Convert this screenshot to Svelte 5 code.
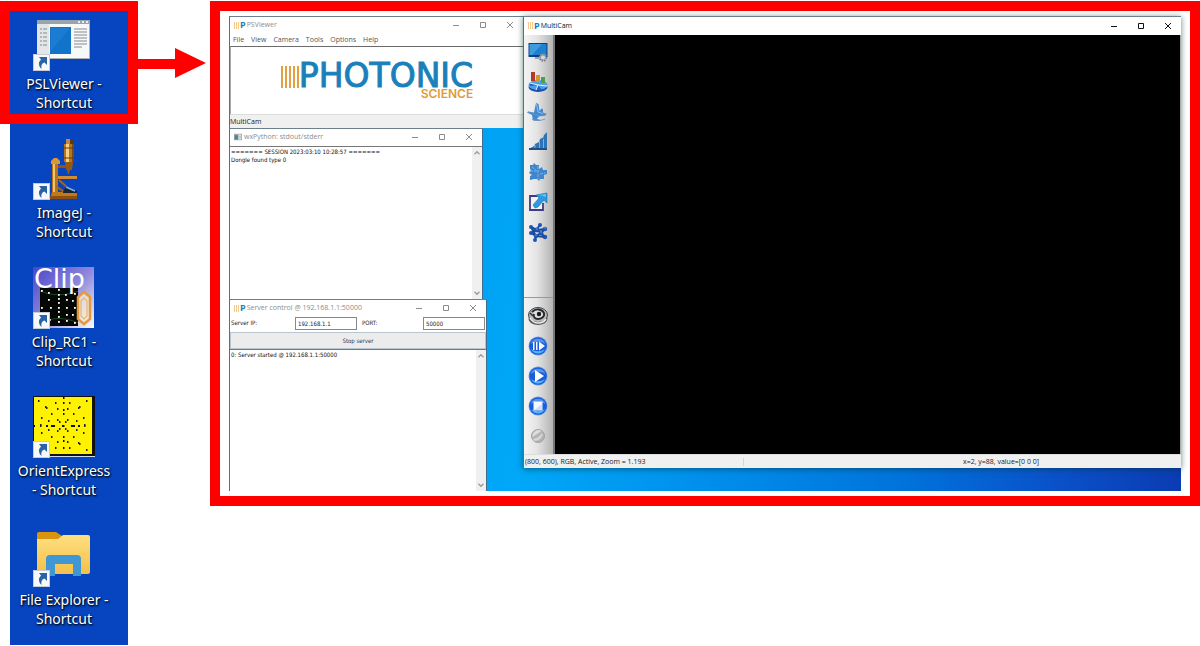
<script>
  const shortcuts = [
    { icon: 'viewer', lines: ['PSLViewer -', 'Shortcut'] },
    { icon: 'scope', lines: ['ImageJ -', 'Shortcut'] },
    { icon: 'clip', lines: ['Clip_RC1 -', 'Shortcut'] },
    { icon: 'orient', lines: ['OrientExpress', '- Shortcut'] },
    { icon: 'folder', lines: ['File Explorer -', 'Shortcut'] }
  ];
  const menus = ['File', 'View', 'Camera', 'Tools', 'Options', 'Help'];
  const tools = ['display', 'chart', 'plane', 'levels', 'puzzle', 'export', 'network'];
  const controls = ['camera', 'step', 'play', 'stop', 'record'];

  // Spots of the Laue pattern on the OrientExpress icon, one quadrant each
  const spots = [
    [22, 6], [12, 10], [13, 11], [24, 12], [18, 17], [24, 23], [26, 25],
    [8, 21], [15, 24], [7, 28], [5, 4]
  ];
  const mirrored = spots.flatMap(([x, y]) => [
    [x, y], [58 - x, y], [x, 57 - y], [58 - x, 57 - y]
  ]);
  const axisX = [1, 14, 19, 21, 30, 39, 41, 46];
  const axisY = [1, 6, 13, 17, 29, 40, 44, 51];

  const clipDots = [
    [9, 23], [16, 25], [26, 22], [26, 27], [26, 31], [26, 35], [26, 40], [26, 44],
    [26, 49], [26, 54], [33, 27], [42, 26], [16, 32], [34, 32], [40, 33], [9, 40],
    [18, 40], [34, 40], [42, 40], [34, 47], [40, 47], [34, 53], [42, 55], [17, 52], [14, 55]
  ];

  let ip = $state('192.168.1.1');
  let port = $state('50000');
</script>

{#snippet caption(title, brand, active)}
  <header class="caption" class:active>
    {#if brand}
      <span class="brand" aria-hidden="true"><i></i><i></i><i></i><b>P</b></span>
    {:else}
      <svg class="appicon" viewBox="0 0 10 8" aria-hidden="true">
        <rect x=".5" y=".5" width="9" height="7" fill="#eef3f5" stroke="#9aa5aa" />
        <rect x="1" y="1.5" width="4" height="5.5" fill="#3a8a98" />
        <path d="M6 3h3M6 5h3" stroke="#9aa" />
      </svg>
    {/if}
    <span class="title">{title}</span>
    <button aria-label="Minimise"><svg viewBox="0 0 8 8"><path d="M1 4.5h6" /></svg></button>
    <button aria-label="Maximise"><svg viewBox="0 0 8 8"><path d="M1.500 1.500h5v5h-5z" /></svg></button>
    <button aria-label="Close"><svg viewBox="0 0 8 8"><path d="M1 1l6 6M7 1l-6 6" /></svg></button>
  </header>
{/snippet}

{#snippet scrollbar()}
  <div class="scrollbar" aria-hidden="true">
    <svg viewBox="0 0 8 8"><path d="M2 5l2-2 2 2" /></svg>
    <svg viewBox="0 0 8 8"><path d="M2 3l2 2 2-2" /></svg>
  </div>
{/snippet}

{#snippet toolIcon(name)}
  <svg viewBox="0 0 20 20" aria-hidden="true">
    {#if name === 'display'}
      <rect x=".5" y="1" width="19" height="14" fill="#0c3f86" />
      <path d="M1.500 2H18.500v11H1.500z" fill="#1f80d0" />
      <path d="M1.500 2H14L4 13H1.500z" fill="#4aa6e6" opacity=".7" />
      <path d="M7 15h4v2H7z" fill="#9aa4b0" />
      <circle cx="15" cy="15.500" r="3.200" fill="#ddd" stroke="#7d858d" stroke-width="2.200" stroke-dasharray="1.600 .8" />
      <circle cx="15" cy="15.500" r="2.500" fill="#d6dade" stroke="#8b929a" />
    {:else if name === 'chart'}
      <ellipse cx="10" cy="15" rx="9.500" ry="5" fill="#1251ad" />
      <ellipse cx="10" cy="13" rx="9.500" ry="5" fill="#4f9fe6" />
      <path d="M10 13l-8-2v3zM10 13l-2 5h6z" fill="#1d63c0" />
      <path d="M10 13L2 11M10 13l9 1M10 13l-2 5" stroke="#e8f3ff" stroke-width="1" />
      <path d="M3 0h4v9H3z" fill="#b5382c" />
      <path d="M8 3h4v7H8z" fill="#cf9a2a" />
      <path d="M13 5h4v6h-4z" fill="#49a04a" />
    {:else if name === 'plane'}
      <path d="M8 1l2.500 1 1 7 2-2.500 1.500.5 0 3.500 4 1.500-3.500 2-4.500.5-2 2.500 4 1-2 1-6-.5-1-5.500-5-2.500 1-1 6 1z" fill="#4389cf" />
      <path d="M8.500 2l1.500 8 5 1.500" fill="none" stroke="#9ccbf3" stroke-width=".8" />
      <path d="M0 10c5 1 9 5 18 3M4 17c4 2 8 2 13 0" fill="none" stroke="#6d93bd" stroke-width=".9" />
    {:else if name === 'levels'}
      <path d="M1 17l5-3v1l1-3 4-2v1l1-4 3-1.500v1l1-3.500 3-3v17H1z" fill="#2d74b4" />
      <path d="M7 13v3M11.500 10v6M15.500 7v9" stroke="#8fc2ea" stroke-width=".8" />
      <path d="M1 16h18v2H1z" fill="#1f4f86" />
    {:else if name === 'puzzle'}
      <path d="M2 3h3l1-2 2 2h3v4l3-2 1 3h4v4l-3 1v4h-4l-1 2-2-2H6l-4 1v-4l2-1-3-2 2-3-1-1z" fill="#3f86cd" />
      <path d="M2 9h9M10 4v13M4 5l4 3M12 12l5-1" stroke="#7fb2e4" stroke-width="1" stroke-dasharray="3 1" />
    {:else if name === 'export'}
      <path d="M12 4H2v14h13v-7" fill="#f2f2f6" stroke="#3f3c82" stroke-width="1.800" />
      <path d="M5 13l6-7-3-3L19 1v10l-3-3-6 7-3 1z" fill="#2b9adf" stroke="#1470b6" stroke-width=".6" />
      <path d="M11 3l7-1v3z" fill="#63c0ee" />
    {:else if name === 'network'}
      <g stroke="#1c479a" stroke-width="2" fill="none">
        <path d="M3 5l6 3 8-1M3 11l5 3 9 1M12 3l-4 5M13 11l-5 3-1 4M3 5l5 9M9 8l4 3 4-4M3 11l6-3M13 11l4 4" />
      </g>
      <g fill="#1e54b0">
        <circle cx="12" cy="3" r="2" /><circle cx="3" cy="5" r="2" /><circle cx="17" cy="7" r="2.200" />
        <circle cx="9" cy="8" r="2.400" /><circle cx="13" cy="11" r="2.400" /><circle cx="3" cy="11" r="2" />
        <circle cx="8" cy="14" r="2.200" /><circle cx="17" cy="15" r="2.200" /><circle cx="7" cy="18" r="2" />
      </g>
      <path d="M8 7h2M12 10h2M16 6h2M7 13h2" stroke="#5f9be6" />
    {:else if name === 'camera'}
      <ellipse cx="10" cy="13" rx="9.500" ry="6" fill="#55585a" />
      <ellipse cx="10" cy="9" rx="9.500" ry="7.500" fill="#b9bcbd" stroke="#3f4142" />
      <path d="M2 12c3 6 12 7 16 1" fill="none" stroke="#eee" stroke-width="1.500" />
      <path d="M4 6c4-4 10-3 12 1 1 4-3 6-6 6s-5-2-4-5" fill="#dcdede" stroke="#242627" stroke-width="1.800" />
      <circle cx="11" cy="8" r="2.200" fill="#17191a" />
      <path d="M2 7l3 3" stroke="#333" stroke-width="1.500" />
    {:else if name === 'record'}
      <circle cx="10" cy="10" r="6.500" fill="#b4b4b4" stroke="#a2a2a2" />
      <path d="M4.500 11a6 6 0 0 1 9-6z" fill="#dcdcdc" />
      <path d="M6 15q7 0 9-7l-2 0q-2 4-8 5z" fill="#d6d6d6" />
    {:else}
      <circle cx="10" cy="10" r="9.500" fill="#6aa4ec" />
      <circle cx="10" cy="10" r="8.800" fill="#1b5cd8" />
      <path d="M3 13c3 6 11 6 14 0-4 3-10 3-14 0z" fill="#55b4fa" />
      <path d="M2.500 8a8 8 0 0 1 15 0c-5-3-10-3-15 0z" fill="#5a93ea" />
      {#if name === 'step'}
        <path d="M5 6h1.500v8H5zM8 6h1.500v8H8zM11 5.500l6 4.500-6 4.500z" fill="#f4f8ff" />
      {:else if name === 'play'}
        <path d="M7 4l9 6-9 6z" fill="#fff" />
      {:else}
        <path d="M5.500 5.500h9v9h-9z" fill="#f4f8ff" />
        <path d="M6 14l8-6v6z" fill="#cfdcf2" />
      {/if}
    {/if}
  </svg>
{/snippet}

{#snippet deskIcon(name)}
  <svg viewBox="0 0 64 64" aria-hidden="true">
    {#if name === 'viewer'}
      <rect x="5.500" y="11.500" width="52" height="38" fill="#f7f8f8" stroke="#a9b0b5" />
      <path d="M5 11h53v4H5z" fill="#9aa4ab" />
      <path d="M46 13h2M50 13h2M54 13h2" stroke="#e8ecee" stroke-width="2" />
      <path d="M5 15h12v34H5z" fill="#e3e6e8" />
      <path d="M8 20h2m1 0h4M8 24h2m1 0h4M8 28h2m1 0h4M8 32h2m1 0h4M8 36h2m1 0h4" stroke="#83898d" stroke-width="1.200" />
      <rect x="18" y="18" width="21" height="27" fill="#1173c9" />
      <path d="M19 19h19L19 42z" fill="#1b7dd2" />
      <path d="M42 20h13M42 23h13M42 26h13M42 29h13M42 32h13M42 35h13M42 38h8" stroke="#83898d" stroke-width="1.200" />
    {:else if name === 'scope'}
      <path d="M20 54h25v7H18z" fill="#c07a1c" />
      <path d="M18 58h27v3H18z" fill="#8d4f10" />
      <path d="M20 24h6v30h-6z" fill="#b8741d" />
      <path d="M21 24h2v30h-2z" fill="#f1c668" />
      <path d="M19 23l3-3h3l3 3v3h-9z" fill="#d9993a" />
      <path d="M26 27h9v3h-9z" fill="#8d5414" />
      <path d="M33 1h8v5h-8z" fill="#5a3a18" />
      <path d="M34 1h4v5h-4z" fill="#c08a40" />
      <path d="M32 6h10v18H32z" fill="#b8741f" />
      <path d="M34 6h3v18h-3z" fill="#f6d284" />
      <path d="M40 6h2v18h-2z" fill="#7d4a10" />
      <path d="M32 10h10M32 20h10" stroke="#6d3f0c" />
      <path d="M33 24h8l-1 8h-2l-1 4h-1l-1-4h-1z" fill="#96590f" />
      <path d="M26 38h19v3H26z" fill="#cf8c35" />
      <path d="M26 41h17v1H26z" fill="#60380c" />
      <path d="M27 42l9 8M24 48l8 6" stroke="#a5651a" stroke-width="2" />
      <path d="M31 54l3-6 11 5v2H31z" fill="#1a2436" />
      <path d="M34 49l9 4" stroke="#86b2e2" stroke-width="1.500" />
    {:else if name === 'clip'}
      <defs>
        <linearGradient id="clipbg" x1="0" y1="0" x2="1" y2="1">
          <stop offset="0" stop-color="#4a45c8" /><stop offset=".5" stop-color="#8d88dc" /><stop offset="1" stop-color="#fdfbf6" />
        </linearGradient>
      </defs>
      <path d="M1 0h61v61H1z" fill="url(#clipbg)" />
      <path d="M8 21h38v38H8z" fill="#050705" />
      <path d="M8 24c12 5 26 5 38 0M8 56c12-6 26-6 38 0" fill="none" stroke="#1f5a28" stroke-width=".8" />
      {#each clipDots as [x, y]}<rect {x} {y} width="1.800" height="1.800" fill="#fff" />{/each}
      <path d="M46 30l6-5 6 5v22l-6 5-6-5z" fill="#f6ecd9" fill-opacity=".7" stroke="#e39a3c" stroke-width="2.500" />
      <path d="M49 34l3-3 3 3v15l-3 3-3-3z" fill="none" stroke="#eeb566" stroke-width="1.200" />
      <text x="2" y="21" class="cliptext">Clip</text>
    {:else if name === 'orient'}
      <path d="M1 0h62v60H1z" fill="#111" />
      <path d="M2 1h58v57H2z" fill="#fff200" />
      <path d="M1 60h62v1H1z" fill="#cfdcf2" />
      {#each mirrored as [x, y]}<rect x={x + 1} {y} width="1.500" height="2" fill="#222" />{/each}
      {#each axisX as p}<rect x={p} y="29" width="2" height="2" fill="#111" />{/each}
      {#each axisY as p}<rect x="31" y={p} width="1.500" height="2" fill="#111" />{/each}
    {:else}
      <path d="M5 9a2 2 0 0 1 2-2h17l6 4h26a2 2 0 0 1 2 2v8H5z" fill="#d9930f" />
      <path d="M5 14h21l5-4h25a2 2 0 0 1 2 2v35a2 2 0 0 1-2 2H7a2 2 0 0 1-2-2z" fill="url(#fold)" />
      <defs>
        <linearGradient id="fold" x1="0" y1="0" x2="0" y2="1">
          <stop offset="0" stop-color="#ffdf80" /><stop offset="1" stop-color="#f3c04a" />
        </linearGradient>
      </defs>
      <path d="M14 51V34a4 4 0 0 1 4-4h27a4 4 0 0 1 4 4v17h-8V39H23v12z" fill="#3f97d3" />
    {/if}
    <rect x="1.500" y="45.500" width="16" height="16" fill="#f7f8fa" stroke="#c5ccd6" />
    <path d="M7 48h8v8l-2.500-2.500q-4 1-3 6.500-5-5-.5-9.500z" fill="#2b62a3" />
  </svg>
{/snippet}

<div class="page">
  <nav class="shortcuts">
    {#each shortcuts as s}
      <a class="shortcut" href="#{s.icon}">
        {@render deskIcon(s.icon)}
        <span>{s.lines[0]}<br />{s.lines[1]}</span>
      </a>
    {/each}
    <div class="highlight"></div>
  </nav>

  <svg class="arrow" viewBox="0 0 72 30" aria-hidden="true">
    <path d="M0 11h37V0l31 15-31 15V21H0z" fill="#f00" />
  </svg>

  <div class="frame">
    <main class="desktop">
      <div class="stack">
        <section class="window psviewer">
          {@render caption('PSViewer', true, false)}
          <nav class="menubar">
            {#each menus as m}<button>{m}</button>{/each}
          </nav>
          <div class="banner">
            <span class="bars"><i></i><i></i><i></i><i></i><i></i></span>
            <span class="logo"><strong>PHOTONIC</strong><em>SCIENCE</em></span>
          </div>
          <footer class="status"><span>MultiCam</span></footer>
        </section>

        <section class="window stdout">
          {@render caption('wxPython: stdout/stderr', false, false)}
          <div class="log">
            <textarea readonly aria-label="Output" value={'======= SESSION 2023:03:10 10:28:57 =======\nDongle found type 0'}></textarea>
            {@render scrollbar()}
          </div>
        </section>

        <section class="window server">
          {@render caption('Server control @ 192.168.1.1:50000', true, false)}
          <div class="fields">
            <label for="ip">Server IP:</label>
            <input id="ip" bind:value={ip} />
            <label for="port">PORT:</label>
            <input id="port" bind:value={port} />
          </div>
          <button class="stop">Stop server</button>
          <div class="log">
            <textarea readonly aria-label="Server log" value="0: Server started @ 192.168.1.1:50000"></textarea>
            {@render scrollbar()}
          </div>
        </section>
      </div>

      <section class="window multicam">
        {@render caption('MultiCam', true, true)}
        <div class="work">
          <div class="toolbar">
            <div class="group top">
              {#each tools as t}<button aria-label={t}>{@render toolIcon(t)}</button>{/each}
            </div>
            <div class="group">
              {#each controls as t}<button aria-label={t}>{@render toolIcon(t)}</button>{/each}
            </div>
          </div>
          <div class="view"></div>
        </div>
        <footer class="status split">
          <span>(800, 600), RGB, Active, Zoom = 1.193</span>
          <span>x=2, y=88, value=[0 0 0]</span>
        </footer>
      </section>
    </main>
  </div>
</div>

<style>
  :global(body) {
    margin: 0;
    background: #fff;
  }
  .page {
    display: grid;
    grid-template-columns: 138px 72px minmax(0, 1fr);
    align-items: start;
    padding-top: 1px;
    font-family: 'Open Sans', 'Noto Sans', sans-serif;
    font-size: 7px;
    line-height: 8px;
    color: #222;
  }
  .page :is(button, input, textarea) {
    box-sizing: border-box;
    margin: 0;
    padding: 0;
    border: 0;
    border-radius: 0;
    outline: 0;
    background: none;
    font: inherit;
    color: inherit;
  }
  .page svg {
    display: block;
    overflow: visible;
  }

  .shortcuts {
    position: relative;
    display: flex;
    flex-direction: column;
    align-items: center;
    gap: 26px;
    margin: 0 10px;
    padding: 8px 10px 17px 0;
    background: #0645bf;
  }
  .shortcut {
    display: flex;
    flex-direction: column;
    gap: 1px;
    align-items: center;
    font-family: 'Noto Sans', sans-serif;
    font-size: 14px;
    line-height: 19px;
    text-align: center;
    white-space: nowrap;
    text-decoration: none;
    color: #fff;
    text-shadow: 1px 1px 2px #000, 0 1px 2px #001a50;
  }
  .shortcut svg {
    width: 64px;
    height: 64px;
  }
  .cliptext {
    font: 27px 'DejaVu Sans', sans-serif;
    fill: #fff;
    text-shadow: none;
  }
  .highlight {
    position: absolute;
    inset: 0 -10px auto -10px;
    height: 103px;
    border: 10px solid #f00;
    pointer-events: none;
  }
  .arrow {
    width: 72px;
    height: 30px;
    margin-top: 47px;
  }

  .frame {
    border: 10px solid #f00;
    padding: 5px 9px;
  }
  .desktop {
    display: grid;
    grid-template-columns: 294px minmax(0, 1fr);
    background: linear-gradient(97deg, #00a2f4 27%, #00a8f8 34%, #0090ec 52%, #0074dc 72%, #0a50c8 88%, #0a3cb2);
  }
  .stack {
    display: flex;
    flex-direction: column;
    align-items: flex-start;
  }
  .window {
    box-sizing: border-box;
    display: flex;
    flex-direction: column;
    border-top: 1px solid #6d7f8c;
    border-left: 1px solid #4f7388;
    background: #fff;
  }
  .psviewer {
    width: 100%;
    min-height: 112px;
  }
  .stdout {
    width: 254px;
    min-height: 171px;
    border-right: 1px solid #3f6f90;
  }
  .server {
    width: 258px;
    min-height: 192px;
    border-right: 1px solid #3f6f90;
  }
  .multicam {
    margin-bottom: 23px;
    box-shadow: 0 1px 6px #0339;
  }

  .caption {
    box-sizing: border-box;
    display: flex;
    align-items: center;
    height: 17px;
    padding: 0 0 1px 4px;
    color: #8c8c8c;
  }
  .caption.active {
    height: 18px;
    color: #111;
  }
  .title {
    flex: 1;
    margin-left: 1px;
    white-space: nowrap;
  }
  .brand {
    display: flex;
    align-items: center;
    gap: 1px;
  }
  .brand i {
    width: 1px;
    height: 7px;
    background: #f2c88c;
  }
  .brand b {
    font: bold 9px/8px 'Open Sans', sans-serif;
    color: #1d7db8;
  }
  .appicon {
    width: 10px;
    height: 8px;
    margin-right: 1px;
  }
  .page .caption button {
    width: 27px;
    padding-left: 10px;
  }
  .caption svg {
    width: 8px;
    height: 8px;
    fill: none;
    stroke: currentColor;
  }

  .menubar {
    display: flex;
    gap: 7px;
    height: 12px;
    padding-left: 3px;
    color: #555;
  }
  .banner {
    flex: 1;
    display: flex;
    justify-content: center;
    align-items: center;
    padding-top: 2px;
    border-top: 1px solid #6b6b6b;
    border-left: 1px solid #aaa;
  }
  .bars {
    display: flex;
    gap: 2px;
    height: 22px;
    margin-bottom: 10px;
  }
  .bars i {
    width: 2px;
    background: #e2a040;
  }
  .logo {
    display: flex;
    flex-direction: column;
    align-items: flex-end;
    font-family: Inter, sans-serif;
  }
  .logo strong {
    font-family: 'DejaVu Sans', sans-serif;
    font-size: 33px;
    font-weight: 400;
    line-height: 24px;
    color: #1a80bb;
    -webkit-text-stroke: 1px #1a80bb;
  }
  .logo em {
    font-size: 12px;
    font-weight: 600;
    font-style: normal;
    line-height: 11px;
    color: #e09a35;
  }
  .status {
    display: flex;
    align-items: center;
    height: 13px;
    border-top: 1px solid #ddd;
    background: #f0f0f0;
  }
  .split {
    display: grid;
    grid-template-columns: 1fr 1fr 1fr;
  }
  .split span {
    padding-left: 1px;
  }
  .split span + span {
    grid-column: 2 / 4;
    padding-left: 50%;
    border-left: 1px solid #d5d5d5;
  }

  .log {
    flex: 1;
    display: flex;
    border-top: 1px solid #777;
    font-family: 'DejaVu Sans Condensed', 'DejaVu Sans', sans-serif;
    font-size: 6px;
    color: #111;
  }
  .page .log textarea {
    flex: 1;
    min-width: 0;
    padding: 1px;
    resize: none;
    overflow: hidden;
    white-space: pre;
  }
  .scrollbar {
    display: flex;
    flex-direction: column;
    justify-content: space-between;
    width: 10px;
    padding: 1px 0;
    background: #f0f0f0;
  }
  .scrollbar svg {
    width: 10px;
    height: 10px;
    fill: none;
    stroke: #999;
  }
  .fields {
    display: grid;
    grid-template-columns: 62px 62px 62px 1fr;
    column-gap: 2px;
    height: 15px;
    padding: 0 1px;
    line-height: 12px;
    font-family: 'DejaVu Sans Condensed', 'DejaVu Sans', sans-serif;
    font-size: 6px;
  }
  .page .fields input {
    width: 100%;
    height: 13px;
    padding-left: 2px;
    border: 1px solid #888;
    background: #fff;
  }
  .fields label + input + label {
    padding-left: 3px;
  }
  .page .stop {
    height: 17px;
    border: 1px solid #b9c6cf;
    background: #ececec;
    font-family: 'DejaVu Sans Condensed', 'DejaVu Sans', sans-serif;
    font-size: 6px;
    color: #1e3c66;
  }

  .work {
    flex: 1;
    display: flex;
  }
  .toolbar {
    display: flex;
    flex-direction: column;
    width: 29px;
    border-right: 2px solid #777;
    background: linear-gradient(90deg, #f4f4f4, #e4e4e4 45%, #b4b4b4);
  }
  .group {
    display: flex;
    flex-direction: column;
    align-items: center;
    gap: 10px;
    padding: 8px 1px 8px 0;
  }
  .group.top {
    flex: 1;
    padding-top: 7px;
    border-bottom: 1px solid #999;
  }
  .group button,
  .group svg {
    width: 20px;
    height: 20px;
  }
  .view {
    flex: 1;
    background: #000;
    border-right: 1px solid #aaa;
  }
</style>
